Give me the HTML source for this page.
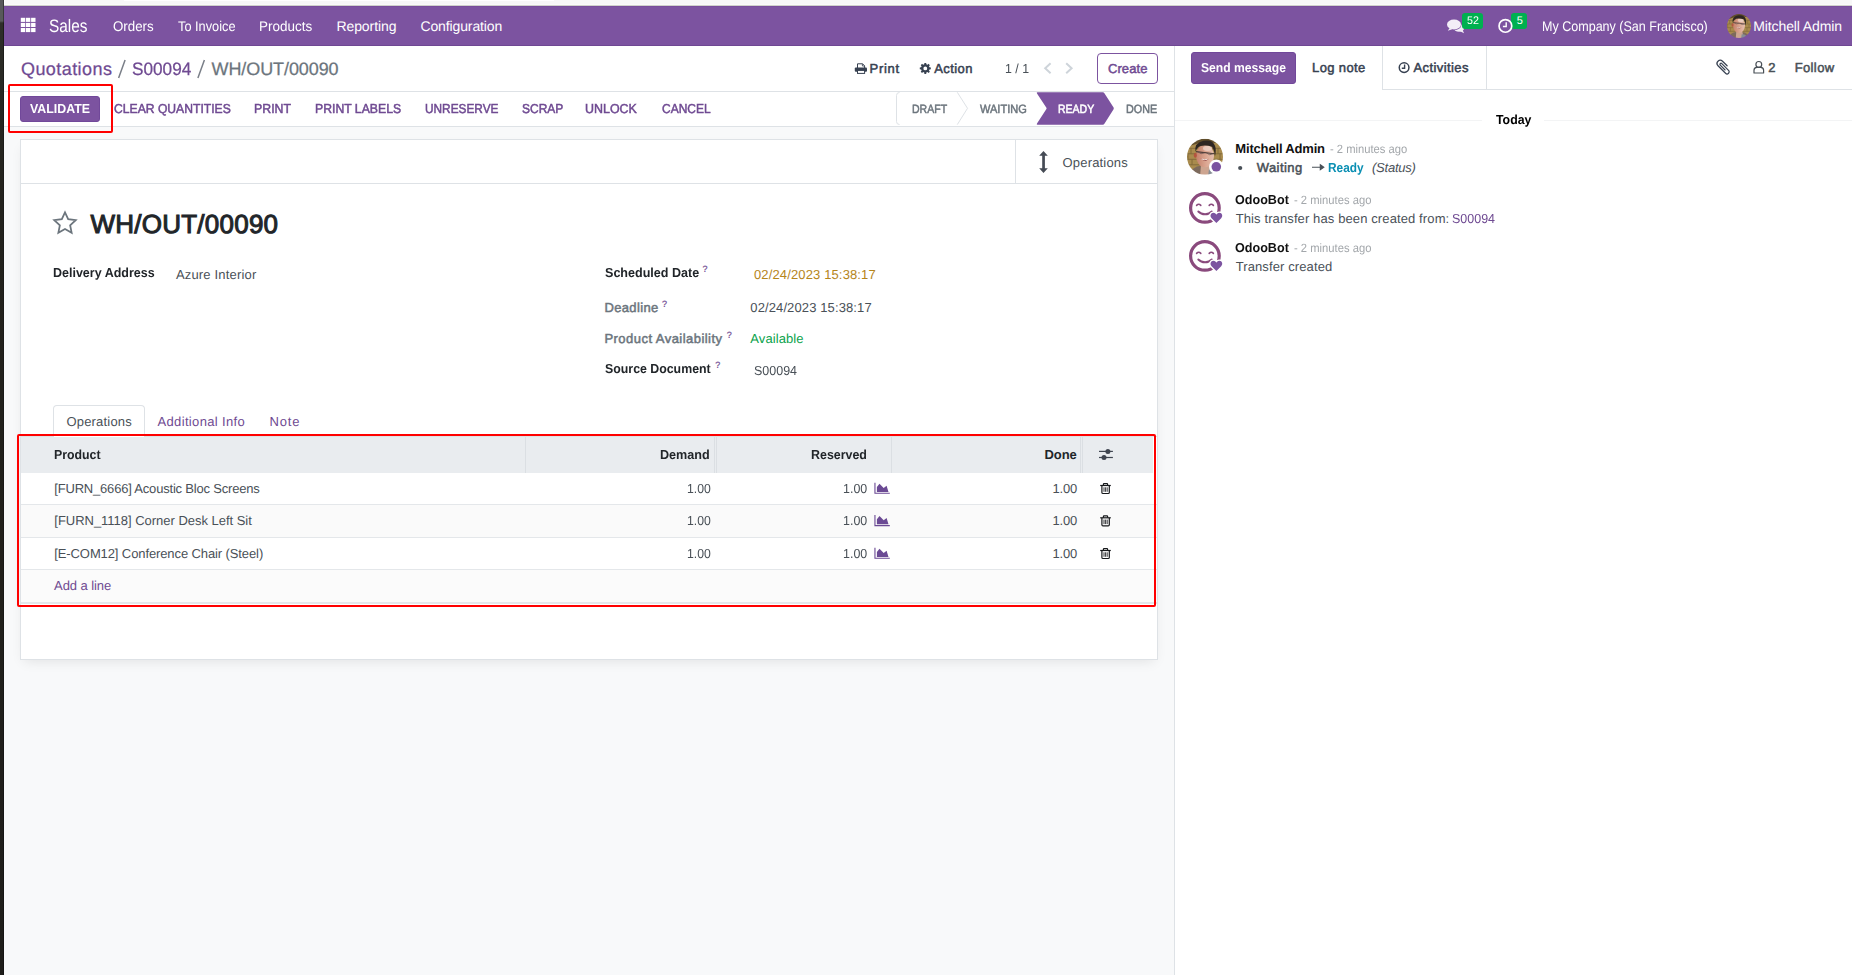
<!DOCTYPE html>
<html lang="en"><head><meta charset="utf-8"><title>Odoo - WH/OUT/00090</title>
<style>
*{box-sizing:border-box;margin:0;padding:0}
html,body{width:1852px;height:975px;overflow:hidden;background:#fff}
body{position:relative;font-family:"Liberation Sans",sans-serif;text-rendering:geometricPrecision;-webkit-font-smoothing:antialiased}
.a{position:absolute}
.t{position:absolute;white-space:nowrap;line-height:1;display:block;transform-origin:0 0}
.m{-webkit-text-stroke:0.5px currentColor}
svg{position:absolute;overflow:visible}
.ln{position:absolute;background:#dee2e6}
</style></head>
<body>

<!-- desktop strip on the left, window top edge -->
<div class="a" style="left:0;top:0;width:4px;height:975px;background:linear-gradient(#58595b 0,#58595b 21px,#2e2f29 23px,#2b2b26 60px,#23221d 200px,#1f1e1a 100%)"></div>
<div class="a" style="left:3px;top:0;width:1px;height:975px;background:linear-gradient(#38393a 0,#38393a 21px,#1c1c1a 23px,#141413 100%)"></div>
<div class="a" style="left:4px;top:0;width:1848px;height:6px;background:#f7f7f7"></div>
<div class="a" style="left:4px;top:0;width:1px;height:6px;background:#fff"></div>
<div class="a" style="left:124px;top:0;width:430px;height:1px;background:#fff"></div>
<div class="a" style="left:4px;top:4px;width:1848px;height:1px;background:#fafafa"></div>
<div class="a" style="left:4px;top:5px;width:1848px;height:1px;background:#d0d2cc"></div>
<!-- navbar -->
<div class="a" style="left:4px;top:6px;width:1848px;height:40px;background:#7c53a0;border-top:1px solid #774d9b;border-bottom:1px solid #6f4893"></div>
<!-- control panel -->
<div class="a" style="left:4px;top:46px;width:1170px;height:81px;background:#fff"></div>
<div class="ln" style="left:4px;top:91px;width:1170px;height:1px"></div>
<div class="ln" style="left:4px;top:126px;width:1170px;height:1px"></div>
<!-- content background -->
<div class="a" style="left:4px;top:127px;width:1170px;height:848px;background:#f8f9fa"></div>
<!-- chatter -->
<div class="a" style="left:1174px;top:46px;width:678px;height:929px;background:#fff;border-left:1px solid #dee2e6"></div>
<!-- form sheet -->
<div class="a" style="left:20px;top:139px;width:1138px;height:521px;background:#fff;border:1px solid #dee2e6;box-shadow:0 5px 12px -4px rgba(0,0,0,.10)"></div>
<div class="ln" style="left:21px;top:183px;width:1136px;height:1px"></div>
<div class="ln" style="left:1015px;top:140px;width:1px;height:43px"></div>

<!-- buttons -->
<div class="a" style="left:20px;top:96px;width:80px;height:26px;background:#7c53a0;border:1px solid #71489a;border-radius:3px"></div>
<div class="a" style="left:1097px;top:53px;width:61px;height:31px;background:#fff;border:1px solid #7c53a0;border-radius:4px"></div>
<div class="a" style="left:1191px;top:52px;width:105px;height:32px;background:#7c53a0;border:1px solid #71489a;border-radius:3px"></div>
<!-- statusbar -->
<svg style="left:890px;top:86px" width="290" height="46" viewBox="890 86 290 46">
 <path d="M899.5 92.5 Q896.5 92.5 896.5 95.5 V121.5 Q896.5 124.5 899.5 124.5" fill="none" stroke="#dee2e6" stroke-width="1"/>
 <path d="M957.3 92.3 L967.5 108.3 L957.3 124.6" fill="none" stroke="#dee2e6" stroke-width="1"/>
 <path d="M1037.6 92.2 H1102.8 Q1103.8 92.2 1104.4 93.2 L1113.6 107.6 Q1114 108.4 1113.6 109.2 L1104.4 123.8 Q1103.8 124.8 1102.8 124.8 H1037.6 Q1036.2 124.8 1037 123.6 L1046.4 109 Q1046.8 108.4 1046.4 107.8 L1037 93.4 Q1036.2 92.2 1037.6 92.2 Z" fill="#7c53a0"/>
</svg>
<!-- chatter top bar -->
<div class="ln" style="left:1382px;top:46px;width:1px;height:44px"></div>
<div class="ln" style="left:1486px;top:46px;width:1px;height:44px"></div>
<div class="ln" style="left:1382px;top:89px;width:470px;height:1px"></div>
<div class="a" style="left:1175px;top:120px;width:677px;height:1px;background:#f3f4f5"></div>
<div class="a" style="left:1482px;top:112px;width:62px;height:16px;background:#fff"></div>
<!-- tabs -->
<div class="ln" style="left:21px;top:436px;width:1136px;height:1px"></div>
<div class="a" style="left:53px;top:405px;width:92px;height:33px;background:#fff;border:1px solid #dee2e6;border-bottom:0;border-radius:4px 4px 0 0"></div>
<!-- table -->
<div class="a" style="left:21px;top:437px;width:1132px;height:36px;background:#e9ecef"></div>
<div class="a" style="left:525px;top:437px;width:1px;height:36px;background:#dbdfe3"></div>
<div class="a" style="left:714px;top:437px;width:1px;height:36px;background:#dbdfe3"></div>
<div class="a" style="left:716px;top:437px;width:1px;height:36px;background:#dbdfe3"></div>
<div class="a" style="left:891px;top:437px;width:1px;height:36px;background:#dbdfe3"></div>
<div class="a" style="left:1080px;top:437px;width:1px;height:36px;background:#dbdfe3"></div>
<div class="a" style="left:1082px;top:437px;width:1px;height:36px;background:#dbdfe3"></div>
<div class="a" style="left:21px;top:505px;width:1136px;height:32px;background:#fafafa"></div>
<div class="a" style="left:21px;top:570px;width:1136px;height:32px;background:#fbfbfb"></div>
<div class="a" style="left:21px;top:504px;width:1136px;height:1px;background:#e4e7ea"></div>
<div class="a" style="left:21px;top:537px;width:1136px;height:1px;background:#e4e7ea"></div>
<div class="a" style="left:21px;top:569px;width:1136px;height:1px;background:#e4e7ea"></div>
<div class="a" style="left:21px;top:602px;width:1136px;height:2px;background:#e4e7ea"></div>
<!-- red highlight rectangles -->
<div class="a" style="left:8px;top:84px;width:105px;height:49px;border:2px solid #ff0000;border-radius:2px"></div>
<div class="a" style="left:17px;top:434px;width:1139px;height:173px;border:2px solid #ff0000;border-radius:2px"></div>

<svg style="left:0;top:0" width="1852" height="975" viewBox="0 0 1852 975">
 <defs>
  <filter id="sf" x="-5%" y="-5%" width="110%" height="110%"><feGaussianBlur stdDeviation="0.6"/></filter>
  <symbol id="mit" viewBox="0 0 36 36">
   <g filter="url(#sf)">
   <rect x="-2" y="-2" width="40" height="40" fill="#a98b4d"/>
   <g stroke="#806838" stroke-width="0.9" fill="none">
    <path d="M0 9.500h36 M0 15h36 M0 20.500h36 M0 26h36"/>
    <path d="M4 9.500v5.500 M31 9.500v5.500 M1 15v5.500 M33 15v5.500 M5 20.500v5.500 M30 20.500v5.500"/>
   </g>
   <path d="M-2 -2h40v8 q-20 -6 -40 3z" fill="#4a381f" opacity=".75"/>
   <path d="M2 38 q3 -11 12 -11 h9 q9 1 12 11z" fill="#7d6a5c"/>
   <path d="M13 38 l1 -12 h9 l2 12z" fill="#cda590"/>
   <path d="M22 30.500 q6 -1.500 10 7.500 h-11z" fill="#868d94"/>
   <linearGradient id="fg" x1="0" x2="1" y1="0" y2="0"><stop offset="0" stop-color="#c4806a"/><stop offset=".55" stop-color="#dba691"/><stop offset="1" stop-color="#e6bfae"/></linearGradient>
   <ellipse cx="18" cy="17.200" rx="9" ry="11.300" fill="url(#fg)"/>
   <ellipse cx="20.500" cy="9.500" rx="4.500" ry="2.600" fill="#f1d9cf" opacity=".7"/>
   <ellipse cx="8.300" cy="16.500" rx="1.500" ry="2.500" fill="#b4553f"/>
   <path d="M8.500 13 q-1.500 -9 8 -11 q9 -1.500 11.500 5 q1.500 4 0 10.500 q-0.800 -6.500 -3 -9.500 q-6 -2.300 -11.300 -0.800 q-3.700 1.300 -5.200 5.800z" fill="#2f2722"/>
   <path d="M9 12.800 L27.500 15" stroke="#4a3a36" stroke-width="1.100"/>
   <path d="M11 13.200 q3 3 6.500 0.800 M19.500 14.200 q3 3 6.500 0.800" stroke="#6a5650" stroke-width="0.8" fill="none"/>
   <path d="M13.300 19.300 q4 2.700 8.400 0.700 q-3.700 4 -8.400 -0.700z" fill="#7a2a2a"/>
   <path d="M14.500 20.200 q3.300 1.300 6 0.300" stroke="#f6ebe6" stroke-width="0.9" fill="none"/>
   </g>
  </symbol>
 </defs>
 <!-- breadcrumb slashes -->
 <path d="M118.600 77.900 L125.100 60.100 M197.900 77.900 L204.400 60.100" stroke="#7a7f88" stroke-width="1.500" fill="none"/>
 <!-- apps grid -->
 <g fill="#fff">
  <rect x="20.800" y="17.800" width="4.400" height="4.100"/><rect x="25.900" y="17.800" width="4.400" height="4.100"/><rect x="31.100" y="17.800" width="4.400" height="4.100"/>
  <rect x="20.800" y="22.900" width="4.400" height="4.100"/><rect x="25.900" y="22.900" width="4.400" height="4.100"/><rect x="31.100" y="22.900" width="4.400" height="4.100"/>
  <rect x="20.800" y="28.000" width="4.400" height="4.100"/><rect x="25.900" y="28.000" width="4.400" height="4.100"/><rect x="31.100" y="28.000" width="4.400" height="4.100"/>
 </g>
 <!-- chat bubbles -->
 <g fill="#f3eef7">
  <ellipse cx="1459" cy="27.900" rx="5.200" ry="3.900"/>
  <path d="M1459.500 31 l4.600 2.200 l-1.700 -3.600z"/>
  <ellipse cx="1454" cy="24.500" rx="7.600" ry="5.600" fill="#7c53a0"/>
  <ellipse cx="1454" cy="24.500" rx="7" ry="5"/>
  <path d="M1450 27.600 l-2.200 3.100 l4.400 -1.400z"/>
 </g>
 <!-- badges -->
 <rect x="1462" y="13" width="21" height="16" rx="3" fill="#00b050"/>
 <rect x="1511" y="13" width="16" height="16" rx="3" fill="#00b050"/>
 <!-- clock -->
 <circle cx="1505.400" cy="25.900" r="6.350" fill="none" stroke="#fff" stroke-width="1.700"/>
 <path d="M1506.200 22.300 V26.500 H1502.900" fill="none" stroke="#fff" stroke-width="1.400"/>
 <!-- navbar avatar -->
 <clipPath id="c1"><circle cx="1739" cy="26" r="12"/></clipPath>
 <g clip-path="url(#c1)"><use href="#mit" x="1727" y="14" width="24" height="24"/></g>
 <!-- print icon -->
 <g>
  <path d="M857.500 68 V63.800 H862.600 L864.600 65.800 V68" fill="#fff" stroke="#374151" stroke-width="1"/>
  <path d="M862.400 63.800 V66 H864.600" fill="none" stroke="#374151" stroke-width="0.800"/>
  <rect x="854.800" y="67.500" width="12.200" height="4.200" rx="1" fill="#374151"/>
  <rect x="857.500" y="70.400" width="7.100" height="3" fill="#fff" stroke="#374151" stroke-width="1"/>
 </g>
 <!-- gear -->
 <path fill="#374151" fill-rule="evenodd" d="M924.260 64.230 L924.380 62.880 L926.220 62.880 L926.340 64.230 L927.520 64.720 L928.560 63.840 L929.860 65.140 L928.980 66.180 L929.470 67.360 L930.820 67.480 L930.820 69.320 L929.470 69.440 L928.980 70.620 L929.860 71.660 L928.560 72.960 L927.520 72.080 L926.340 72.570 L926.220 73.920 L924.380 73.920 L924.260 72.570 L923.080 72.080 L922.040 72.960 L920.740 71.660 L921.620 70.620 L921.130 69.440 L919.780 69.320 L919.780 67.480 L921.130 67.360 L921.620 66.180 L920.740 65.140 L922.040 63.840 L923.080 64.720Z M927.200 68.400 A1.900 1.900 0 1 0 923.400 68.400 A1.900 1.900 0 1 0 927.200 68.400Z"/>
 <!-- pager chevrons -->
 <path d="M1050.600 63.300 L1045.200 68.300 L1050.600 73.300" fill="none" stroke="#ced4da" stroke-width="2"/>
 <path d="M1066.200 63.300 L1071.600 68.300 L1066.200 73.300" fill="none" stroke="#ced4da" stroke-width="2"/>
 <!-- activities clock -->
 <circle cx="1404.100" cy="67.600" r="4.850" fill="none" stroke="#374151" stroke-width="1.500"/>
 <path d="M1404.600 64.500 V68.200 H1401.800" fill="none" stroke="#374151" stroke-width="1.400"/>
 <!-- paperclip -->
 <path transform="translate(1723.800 67) rotate(-45)" d="M3.200 1.500 V-5 A3.200 3.200 0 0 0 -3.200 -5 V5.700 A2.100 2.100 0 0 0 1 5.700 V-3.800 A1.100 1.100 0 0 0 -1.200 -3.800 V3" fill="none" stroke="#374151" stroke-width="1.200" stroke-linecap="round"/>
 <!-- user-o -->
 <g fill="none" stroke="#495057" stroke-width="1.200">
  <circle cx="1758.800" cy="64.400" r="2.900"/>
  <path d="M1754 73 V70.200 Q1754 67.500 1756.800 67.300 H1760.800 Q1763.600 67.500 1763.600 70.200 V73 Z" stroke-linejoin="round"/>
 </g>
 <!-- star-o -->
 <path d="M65.00 212.30 L68.17 219.23 L75.75 220.11 L70.14 225.27 L71.64 232.74 L65.00 229.00 L58.36 232.74 L59.86 225.27 L54.25 220.11 L61.83 219.23Z" fill="none" stroke="#6c757d" stroke-width="1.750"/>
 <!-- arrows-v -->
 <path d="M1043.500 151.100 L1047.800 155.700 H1044.900 V168.300 H1047.800 L1043.500 173 L1039.200 168.300 H1042.200 V155.700 H1039.200 Z" fill="#454b55"/>
 <!-- sliders -->
 <g fill="#3f4550">
  <rect x="1099" y="450.800" width="13.900" height="1.200"/>
  <rect x="1099" y="456.900" width="13.900" height="1.200"/>
  <circle cx="1107.900" cy="451.400" r="2.500"/>
  <circle cx="1104" cy="457.500" r="2.500"/>
 </g>
 <!-- area charts -->
 <g id="ac" fill="#6b4a94">
  <path d="M874.400 482.800 h1.100 v10 h14.300 v1.050 h-15.400z"/>
  <path d="M876.900 491.900 V487 L879.500 483.800 L883.700 488 L886.600 485.700 L888.500 491.900z"/>
 </g>
 <use href="#ac" y="32.300"/>
 <use href="#ac" y="65"/>
 <!-- trash -->
 <g id="tr" fill="none" stroke="#16181b" stroke-width="1.200">
  <path d="M1100.200 485.500 h10.600"/>
  <path d="M1103.400 485.400 v-1.100 q0 -0.700 0.700 -0.700 h2.800 q0.700 0 0.700 0.700 v1.100"/>
  <path d="M1101.900 485.800 v6.600 q0 1.100 1.100 1.100 h5.200 q1.100 0 1.100 -1.100 v-6.600"/>
  <path d="M1104 487.300 v4.500 M1105.600 487.300 v4.500 M1107.200 487.300 v4.500" stroke-width="0.850"/>
 </g>
 <use href="#tr" y="32.300"/>
 <use href="#tr" y="65"/>
 <!-- long arrow right -->
 <path d="M1312 167.300 h9.500 M1320.300 164.800 l3.500 2.500 l-3.500 2.500z" fill="#495057" stroke="#495057" stroke-width="1.100"/>
 <!-- bullet -->
 <circle cx="1240.200" cy="168" r="2.100" fill="#495057"/>
 <!-- chatter avatar: Mitchell -->
 <clipPath id="c2"><circle cx="1205" cy="156.800" r="18"/></clipPath>
 <g clip-path="url(#c2)"><use href="#mit" x="1187" y="138.800" width="36" height="36"/></g>
 <circle cx="1216.300" cy="166.800" r="7.300" fill="#fff"/>
 <circle cx="1216.300" cy="166.800" r="4.800" fill="#7c53a0"/>
 <!-- odoobot avatars -->
 <g id="ob">
  <circle cx="1204.900" cy="207.900" r="14.300" fill="none" stroke="#8a4a7d" stroke-width="3.200"/>
  <path d="M1196.600 205.400 q2.100 -2.300 4.200 0 M1209.200 205.400 q2.100 -2.300 4.200 0" fill="none" stroke="#8a4a7d" stroke-width="1.600" stroke-linecap="round"/>
  <path d="M1198.300 211.500 c3.500 3.700 10 3.700 13.500 0" fill="none" stroke="#8a4a7d" stroke-width="1.900" stroke-linecap="round"/>
  <path d="M1216.400 222.900 L1211.600 218.200 C1209.600 216.200 1210.600 212.800 1213.400 212.800 C1215 212.800 1216 213.800 1216.400 214.800 C1216.800 213.800 1217.800 212.800 1219.400 212.800 C1222.200 212.800 1223.200 216.200 1221.200 218.200 Z" fill="#7c53a0" stroke="#fff" stroke-width="2.800" paint-order="stroke" stroke-linejoin="round"/>
 </g>
 <use href="#ob" y="48"/>
</svg>

<!-- text -->
<span class="t" style="left:49.40px;top:17.00px;font-size:18px;color:#ffffff;transform:scaleX(0.8551);">Sales</span>
<span class="t" style="left:112.50px;top:19.00px;font-size:14px;color:#ffffff;transform:scaleX(0.9512);">Orders</span>
<span class="t" style="left:177.80px;top:19.00px;font-size:14px;color:#ffffff;transform:scaleX(0.9123);">To Invoice</span>
<span class="t" style="left:259.14px;top:19.00px;font-size:14px;color:#ffffff;transform:scaleX(0.9622);">Products</span>
<span class="t" style="left:336.40px;top:19.00px;font-size:14px;color:#ffffff;letter-spacing:-0.077px;">Reporting</span>
<span class="t" style="left:420.40px;top:19.00px;font-size:14px;color:#ffffff;letter-spacing:-0.116px;">Configuration</span>
<span class="t" style="left:1466.70px;top:16.00px;font-size:11px;color:#ffffff;transform:scaleX(0.9738);">52</span>
<span class="t" style="left:1516.70px;top:16.00px;font-size:11px;color:#ffffff;">5</span>
<span class="t" style="left:1542.10px;top:19.00px;font-size:14px;color:#ffffff;transform:scaleX(0.8954);">My Company (San Francisco)</span>
<span class="t" style="left:1753.30px;top:19.00px;font-size:14px;color:#ffffff;letter-spacing:-0.119px;">Mitchell Admin</span>
<span class="t" style="left:21.00px;top:60.00px;font-size:18px;color:#6f4a92;letter-spacing:0.427px;-webkit-text-stroke:.25px currentColor;">Quotations</span>
<span class="t" style="left:131.80px;top:60.00px;font-size:18px;color:#6f4a92;transform:scaleX(0.9557);-webkit-text-stroke:.25px currentColor;">S00094</span>
<span class="t" style="left:211.50px;top:60.00px;font-size:18px;color:#6c757d;letter-spacing:-0.084px;-webkit-text-stroke:.25px currentColor;">WH/OUT/00090</span>
<span class="t m" style="left:869.55px;top:62.00px;font-size:13px;color:#374151;letter-spacing:0.695px;">Print</span>
<span class="t m" style="left:934.25px;top:62.00px;font-size:13px;color:#374151;letter-spacing:0.420px;">Action</span>
<span class="t" style="left:1004.90px;top:62.00px;font-size:13px;color:#495057;transform:scaleX(0.9495);">1 / 1</span>
<span class="t m" style="left:1107.95px;top:62.00px;font-size:13px;color:#6f4a92;letter-spacing:0.102px;">Create</span>
<span class="t" style="left:30.10px;top:102.00px;font-size:13px;color:#ffffff;font-weight:700;transform:scaleX(0.9511);">VALIDATE</span>
<span class="t m" style="left:113.95px;top:102.00px;font-size:13px;color:#6f4a92;transform:scaleX(0.9346);">CLEAR QUANTITIES</span>
<span class="t m" style="left:254.30px;top:102.00px;font-size:13px;color:#6f4a92;transform:scaleX(0.9485);">PRINT</span>
<span class="t m" style="left:314.71px;top:102.00px;font-size:13px;color:#6f4a92;transform:scaleX(0.9409);">PRINT LABELS</span>
<span class="t m" style="left:424.54px;top:102.00px;font-size:13px;color:#6f4a92;transform:scaleX(0.9112);">UNRESERVE</span>
<span class="t m" style="left:522.05px;top:102.00px;font-size:13px;color:#6f4a92;transform:scaleX(0.9225);">SCRAP</span>
<span class="t m" style="left:585.49px;top:102.00px;font-size:13px;color:#6f4a92;transform:scaleX(0.9569);">UNLOCK</span>
<span class="t m" style="left:661.75px;top:102.00px;font-size:13px;color:#6f4a92;transform:scaleX(0.9218);">CANCEL</span>
<span class="t m" style="left:912.35px;top:103.00px;font-size:12px;color:#6c757d;transform:scaleX(0.8779);">DRAFT</span>
<span class="t m" style="left:980.15px;top:103.00px;font-size:12px;color:#6c757d;transform:scaleX(0.9199);">WAITING</span>
<span class="t m" style="left:1058.35px;top:103.00px;font-size:12px;color:#ffffff;transform:scaleX(0.8757);">READY</span>
<span class="t m" style="left:1126.25px;top:103.00px;font-size:12px;color:#6c757d;transform:scaleX(0.8971);">DONE</span>
<span class="t" style="left:1201.20px;top:61.00px;font-size:13px;color:#ffffff;font-weight:700;transform:scaleX(0.9338);">Send message</span>
<span class="t m" style="left:1312.05px;top:61.00px;font-size:13px;color:#374151;letter-spacing:0.361px;">Log note</span>
<span class="t m" style="left:1413.55px;top:61.00px;font-size:13px;color:#374151;letter-spacing:0.401px;">Activities</span>
<span class="t m" style="left:1768.35px;top:61.00px;font-size:13px;color:#495057;">2</span>
<span class="t m" style="left:1794.65px;top:61.00px;font-size:13px;color:#495057;letter-spacing:0.385px;">Follow</span>
<span class="t" style="left:1495.70px;top:113.00px;font-size:13px;color:#000;font-weight:700;transform:scaleX(0.9478);">Today</span>
<span class="t" style="left:90.50px;top:211.00px;font-size:26px;color:#212529;letter-spacing:0.238px;-webkit-text-stroke:1px currentColor;">WH/OUT/00090</span>
<span class="t" style="left:53.20px;top:266.00px;font-size:13px;color:#212529;font-weight:700;transform:scaleX(0.9614);">Delivery Address</span>
<span class="t" style="left:175.90px;top:268.00px;font-size:13px;color:#495057;letter-spacing:0.184px;">Azure Interior</span>
<span class="t" style="left:605.20px;top:266.00px;font-size:13px;color:#212529;font-weight:700;transform:scaleX(0.9661);">Scheduled Date</span>
<span class="t" style="left:702.40px;top:265.00px;font-size:9px;color:#6f4a92;-webkit-text-stroke:.2px currentColor;">?</span>
<span class="t" style="left:753.90px;top:268.00px;font-size:13px;color:#b5851a;letter-spacing:0.142px;">02/24/2023 15:38:17</span>
<span class="t m" style="left:604.45px;top:301.00px;font-size:13px;color:#6c757d;letter-spacing:0.359px;">Deadline</span>
<span class="t" style="left:662.00px;top:300.00px;font-size:9px;color:#6f4a92;-webkit-text-stroke:.2px currentColor;">?</span>
<span class="t" style="left:750.30px;top:301.00px;font-size:13px;color:#495057;letter-spacing:0.114px;">02/24/2023 15:38:17</span>
<span class="t m" style="left:604.45px;top:332.00px;font-size:13px;color:#6c757d;letter-spacing:0.458px;">Product Availability</span>
<span class="t" style="left:726.80px;top:331.00px;font-size:9px;color:#6f4a92;-webkit-text-stroke:.2px currentColor;">?</span>
<span class="t" style="left:750.30px;top:332.00px;font-size:13px;color:#0aa24b;letter-spacing:0.089px;">Available</span>
<span class="t" style="left:605.20px;top:362.00px;font-size:13px;color:#212529;font-weight:700;transform:scaleX(0.9498);">Source Document</span>
<span class="t" style="left:715.20px;top:361.00px;font-size:9px;color:#6f4a92;-webkit-text-stroke:.2px currentColor;">?</span>
<span class="t" style="left:754.30px;top:364.00px;font-size:13px;color:#495057;transform:scaleX(0.9598);">S00094</span>
<span class="t" style="left:1062.60px;top:156.00px;font-size:13px;color:#495057;letter-spacing:0.168px;">Operations</span>
<span class="t" style="left:66.50px;top:415.00px;font-size:13px;color:#495057;letter-spacing:0.179px;">Operations</span>
<span class="t" style="left:157.50px;top:415.00px;font-size:13px;color:#6f4a92;letter-spacing:0.346px;">Additional Info</span>
<span class="t" style="left:269.40px;top:415.00px;font-size:13px;color:#6f4a92;letter-spacing:0.857px;">Note</span>
<span class="t" style="left:54.30px;top:448.00px;font-size:13px;color:#212529;font-weight:700;transform:scaleX(0.9481);">Product</span>
<span class="t" style="left:660.20px;top:448.00px;font-size:13px;color:#212529;font-weight:700;transform:scaleX(0.9699);">Demand</span>
<span class="t" style="left:810.60px;top:448.00px;font-size:13px;color:#212529;font-weight:700;transform:scaleX(0.9557);">Reserved</span>
<span class="t" style="left:1044.60px;top:448.00px;font-size:13px;color:#212529;font-weight:700;letter-spacing:-0.123px;">Done</span>
<span class="t" style="left:54.30px;top:482.00px;font-size:13px;color:#495057;letter-spacing:-0.195px;">[FURN_6666] Acoustic Bloc Screens</span>
<span class="t" style="left:54.30px;top:514.00px;font-size:13px;color:#495057;letter-spacing:-0.022px;">[FURN_1118] Corner Desk Left Sit</span>
<span class="t" style="left:54.30px;top:547.00px;font-size:13px;color:#495057;letter-spacing:-0.106px;">[E-COM12] Conference Chair (Steel)</span>
<span class="t" style="left:54.10px;top:579.00px;font-size:13px;color:#6f4a92;letter-spacing:-0.077px;">Add a line</span>
<span class="t" style="left:686.80px;top:482.00px;font-size:13px;color:#495057;transform:scaleX(0.9413);">1.00</span>
<span class="t" style="left:686.80px;top:514.00px;font-size:13px;color:#495057;transform:scaleX(0.9413);">1.00</span>
<span class="t" style="left:686.80px;top:547.00px;font-size:13px;color:#495057;transform:scaleX(0.9413);">1.00</span>
<span class="t" style="left:843.00px;top:482.00px;font-size:13px;color:#495057;transform:scaleX(0.9573);">1.00</span>
<span class="t" style="left:843.00px;top:514.00px;font-size:13px;color:#495057;transform:scaleX(0.9573);">1.00</span>
<span class="t" style="left:843.00px;top:547.00px;font-size:13px;color:#495057;transform:scaleX(0.9573);">1.00</span>
<span class="t" style="left:1052.50px;top:482.00px;font-size:13px;color:#495057;letter-spacing:-0.191px;">1.00</span>
<span class="t" style="left:1052.50px;top:514.00px;font-size:13px;color:#495057;letter-spacing:-0.191px;">1.00</span>
<span class="t" style="left:1052.50px;top:547.00px;font-size:13px;color:#495057;letter-spacing:-0.191px;">1.00</span>
<span class="t" style="left:1235.30px;top:142.00px;font-size:13px;color:#111;font-weight:700;letter-spacing:-0.170px;">Mitchell Admin</span>
<span class="t" style="left:1329.80px;top:143.00px;font-size:12px;color:#a3a7ab;transform:scaleX(0.9333);">- 2 minutes ago</span>
<span class="t m" style="left:1256.65px;top:161.00px;font-size:13px;color:#495057;letter-spacing:0.461px;">Waiting</span>
<span class="t" style="left:1328.40px;top:161.00px;font-size:13px;color:#0a8fb3;font-weight:700;transform:scaleX(0.9123);">Ready</span>
<span class="t" style="left:1372.00px;top:161.00px;font-size:13px;color:#495057;letter-spacing:-0.226px;font-style:italic;">(Status)</span>
<span class="t" style="left:1235.30px;top:193.00px;font-size:13px;color:#111;font-weight:700;transform:scaleX(0.9687);">OdooBot</span>
<span class="t" style="left:1293.50px;top:194.00px;font-size:12px;color:#a3a7ab;transform:scaleX(0.9357);">- 2 minutes ago</span>
<span class="t" style="left:1235.70px;top:212.00px;font-size:13px;color:#495057;letter-spacing:0.113px;">This transfer has been created from:</span>
<span class="t" style="left:1451.70px;top:212.00px;font-size:13px;color:#6f4a92;transform:scaleX(0.9598);">S00094</span>
<span class="t" style="left:1235.30px;top:241.00px;font-size:13px;color:#111;font-weight:700;transform:scaleX(0.9687);">OdooBot</span>
<span class="t" style="left:1293.50px;top:242.00px;font-size:12px;color:#a3a7ab;transform:scaleX(0.9357);">- 2 minutes ago</span>
<span class="t" style="left:1235.70px;top:260.00px;font-size:13px;color:#495057;letter-spacing:0.109px;">Transfer created</span>
</body></html>
